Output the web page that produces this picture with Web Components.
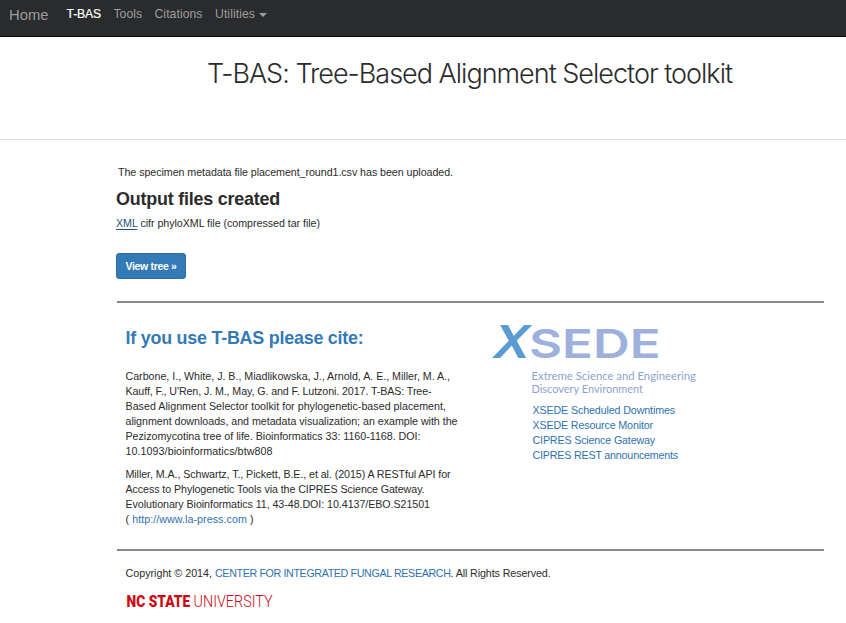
<!DOCTYPE html>
<html lang="en">
<head>
<meta charset="utf-8">
<title>T-BAS</title>
<style>
html,body{margin:0;background:#fff}
body{font:10.7px/15px "Liberation Sans",Arial,sans-serif;color:#2b2b2b;width:846px;height:623px;overflow:hidden}
a{color:#2f72b0;text-decoration:none}
a.visited{color:#23527c;text-decoration:underline;text-underline-offset:2px}
</style>
</head>
<body>
<tbas-page>
  <nav-bar slot="nav">
    <fit-line class="brand" slot="brand" w="39.5">Home</fit-line>
    <fit-line class="active" w="34.5">T-BAS</fit-line>
    <fit-line w="28.5">Tools</fit-line>
    <fit-line w="48">Citations</fit-line>
    <fit-line w="40">Utilities</fit-line>
  </nav-bar>
  <page-title slot="title"><fit-line w="525">T-BAS: Tree-Based Alignment Selector toolkit</fit-line></page-title>
  <upload-result slot="main">
    <fit-line slot="message" w="335">The specimen metadata file placement_round1.csv has been uploaded.</fit-line>
    <fit-line slot="heading" w="164">Output files created</fit-line>
    <fit-line slot="file" w="204"><a class="visited" href="#">XML</a> cifr phyloXML file (compressed tar file)</fit-line>
    <action-button slot="action"><fit-line w="51">View tree »</fit-line></action-button>
  </upload-result>
  <citation-block slot="cite">
    <fit-line slot="heading" w="238">If you use T-BAS please cite:</fit-line>
    <cite-entry>
      <fit-line w="324.5">Carbone, I., White, J. B., Miadlikowska, J., Arnold, A. E., Miller, M. A.,</fit-line>
      <fit-line w="306">Kauff, F., U'Ren, J. M., May, G. and F. Lutzoni. 2017. T-BAS: Tree-</fit-line>
      <fit-line w="320.5">Based Alignment Selector toolkit for phylogenetic-based placement,</fit-line>
      <fit-line w="332">alignment downloads, and metadata visualization; an example with the</fit-line>
      <fit-line w="295">Pezizomycotina tree of life. Bioinformatics 33: 1160-1168. DOI:</fit-line>
      <fit-line w="147">10.1093/bioinformatics/btw808</fit-line>
    </cite-entry>
    <cite-entry>
      <fit-line w="325">Miller, M.A., Schwartz, T., Pickett, B.E., et al. (2015) A RESTful API for</fit-line>
      <fit-line w="299">Access to Phylogenetic Tools via the CIPRES Science Gateway.</fit-line>
      <fit-line w="304.5">Evolutionary Bioinformatics 11, 43-48.DOI: 10.4137/EBO.S21501</fit-line>
      <fit-line w="128">( <a href="#">http://www.la-press.com</a> )</fit-line>
    </cite-entry>
  </citation-block>
  <xsede-panel slot="partner">
    <fit-line w="142.5"><a href="#">XSEDE Scheduled Downtimes</a></fit-line>
    <fit-line w="120.5"><a href="#">XSEDE Resource Monitor</a></fit-line>
    <fit-line w="122.5"><a href="#">CIPRES Science Gateway</a></fit-line>
    <fit-line w="145.5"><a href="#">CIPRES REST announcements</a></fit-line>
  </xsede-panel>
  <page-footer slot="footer"><fit-line w="89.5">Copyright © 2014,&nbsp;</fit-line><fit-line w="235.5"><a href="#">CENTER FOR INTEGRATED FUNGAL RESEARCH</a></fit-line><fit-line w="100">. All Rights Reserved.</fit-line></page-footer>
</tbas-page>
<script>
const component = (name, html) => customElements.define(name, class extends HTMLElement {
  constructor() { super(); this.attachShadow({mode: 'open'}).innerHTML = html; }
});

component('tbas-page', `<style>
:host{display:flex;flex-direction:column;height:623px}
main{display:flex;flex-direction:column;padding:0 22px 0 116px}
.row{display:grid;grid-template-columns:367px 1fr;height:246px;margin-left:1px;border-top:2px solid #888;border-bottom:2px solid #888}
</style><slot name="nav"></slot><slot name="title"></slot>
<main><slot name="main"></slot><div class="row"><slot name="cite"></slot><slot name="partner"></slot></div><slot name="footer"></slot></main>`);

component('nav-bar', `<style>
:host{display:flex;height:36px;background:#292b2d;border-bottom:1px solid #080808;color:#9d9d9d;padding-left:9px;align-items:flex-start}
.brand{font-size:14.8px;line-height:18px;padding-top:6px;width:57.5px}
.links{display:flex;gap:12.5px;font-size:12.2px;line-height:15px;padding-top:7px}
::slotted(.active){color:#fff;-webkit-text-stroke:.2px #fff}
i{border:4px solid transparent;border-top-color:currentColor;border-bottom:0;margin:6px 0 0 -9px;width:0;height:0}
</style><div class="brand"><slot name="brand"></slot></div><div class="links"><slot></slot><i></i></div>`);

component('page-title', `<style>
:host{display:block;height:102px;border-bottom:1px solid #ddd;padding-left:207px;font:300 27px/30px Inter,"Liberation Sans",sans-serif;box-sizing:content-box}
div{padding-top:22px}
</style><div><slot></slot></div>`);

component('upload-result', `<style>
:host{display:flex;flex-direction:column;height:161px;align-items:flex-start}
.m{padding:25px 0 0 2px}.h{font:bold 17.9px/20px "Liberation Sans",sans-serif;margin-top:9px}.f{margin-top:7px}.b{margin-top:22px}
</style><div class="m"><slot name="message"></slot></div><div class="h"><slot name="heading"></slot></div><div class="f"><slot name="file"></slot></div><div class="b"><slot name="action"></slot></div>`);

component('action-button', `<style>
:host{display:flex;justify-content:center;align-items:center;box-sizing:border-box;width:70px;height:26px;background:#337ab7;border:1px solid #2e6da4;border-radius:3px;color:#fff;font-weight:bold;font-size:10.5px}
</style><slot></slot>`);

component('citation-block', `<style>
:host{display:flex;flex-direction:column;padding:24px 0 0 8.5px}
.h{font:bold 17.9px/22px "Liberation Sans",sans-serif;color:#337ab7;height:42px}
</style><div class="h"><slot name="heading"></slot></div><slot></slot>`);

component('cite-entry', `<style>:host{display:block;margin-bottom:8px}</style><slot></slot>`);

component('xsede-panel', `<style>
:host{display:flex;flex-direction:column}
svg{display:block;height:100px;width:230px}
.links{padding-left:48.5px}
</style><svg viewBox="484 303 230 100">
<text x="494.5" y="358" font-family="Liberation Sans" font-weight="bold" font-style="italic" font-size="48" fill="#5b9bd3" textLength="35" lengthAdjust="spacingAndGlyphs">X</text>
<text x="529" y="358" font-family="Inter" font-weight="600" font-size="40" fill="#9eb1dd" textLength="131.5" lengthAdjust="spacingAndGlyphs">SEDE</text>
<g font-family="Lato" font-size="10.9" fill="#8da3cf">
<text x="531.5" y="379.5" textLength="164.5" lengthAdjust="spacingAndGlyphs">Extreme Science and Engineering</text>
<text x="531.5" y="392.8" textLength="111.5" lengthAdjust="spacingAndGlyphs">Discovery Environment</text></g>
</svg><div class="links"><slot></slot></div>`);

component('page-footer', `<style>
:host{display:block;padding:15px 0 0 9.5px}
div{display:flex}
svg{display:block;width:160px;height:30px;margin-top:9px}
</style><div><slot></slot></div><svg viewBox="0 0 160 30" font-family="Roboto" font-size="16.9" fill="#cc0a14">
<text transform="translate(.5 17) scale(.79 1)" font-weight="900" textLength="80.5" lengthAdjust="spacingAndGlyphs">NC STATE</text>
<text transform="translate(67.5 17) scale(.86 1)" font-weight="300" textLength="92" lengthAdjust="spacingAndGlyphs">UNIVERSITY</text></svg>`);

/* A single line of text whose tracking is tuned to fill the width given by "w". */
customElements.define('fit-line', class extends HTMLElement {
  constructor() {
    super();
    this.attachShadow({mode: 'open'}).innerHTML = '<style>:host{display:block;white-space:nowrap}span{display:inline-block}</style><span><slot></slot></span>';
  }
  connectedCallback() {
    const w = parseFloat(this.getAttribute('w'));
    const n = this.textContent.length;
    const natural = this.shadowRoot.querySelector('span').getBoundingClientRect().width;
    this.style.letterSpacing = ((w - natural) / n) + 'px';
  }
});
</script>
</body>
</html>
